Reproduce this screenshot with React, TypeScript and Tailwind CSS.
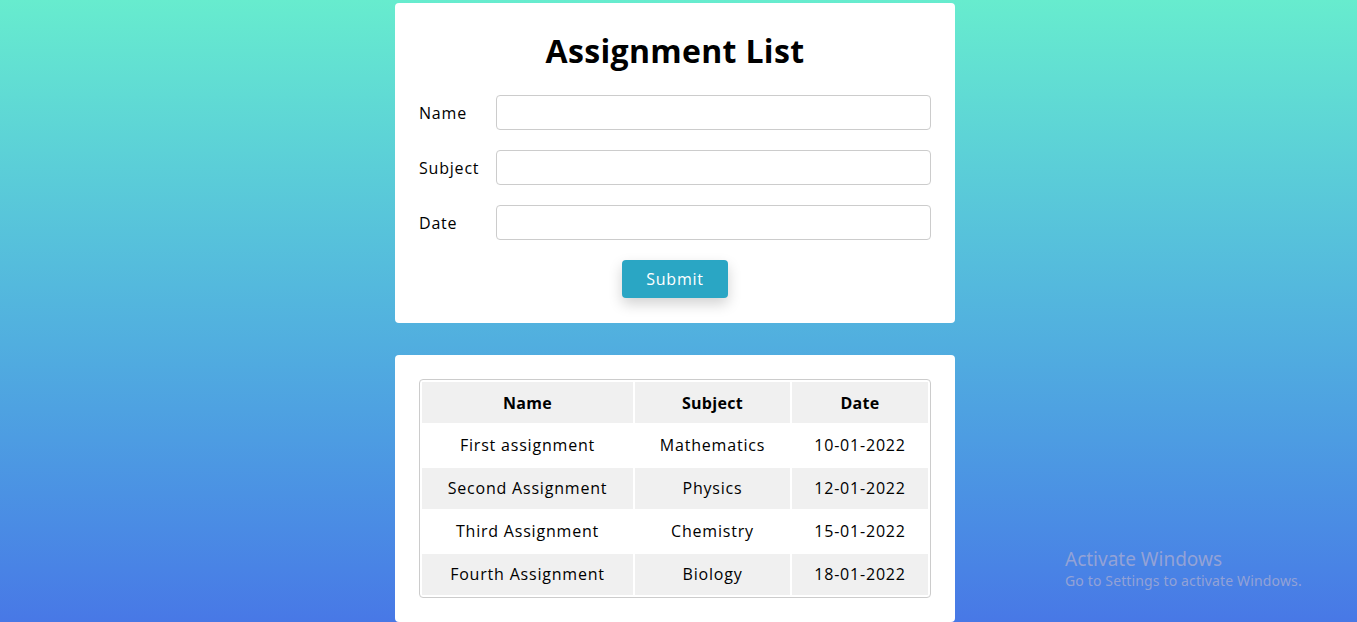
import * as React from 'react';

const rows = [
  { name: 'First assignment', subject: 'Mathematics', date: '10-01-2022' },
  { name: 'Second Assignment', subject: 'Physics', date: '12-01-2022' },
  { name: 'Third Assignment', subject: 'Chemistry', date: '15-01-2022' },
  { name: 'Fourth Assignment', subject: 'Biology', date: '18-01-2022' },
];

const fields = ['Name', 'Subject', 'Date'];

export default function App() {
  return (
    <div className="relative h-[622px] overflow-hidden bg-linear-to-b from-[#67ecce] to-[#4878e6] font-['Open_Sans',sans-serif] text-black">
      <div className="flex flex-col items-center gap-8 pt-[3px] pr-[7px]">
        {/* form card */}
        <div className="w-[560px] rounded bg-white px-6 pt-6 pb-[25px]">
          <h1 className="text-center text-[32px] leading-[48px] font-bold tracking-[0.01em]">Assignment List</h1>
          <form className="mt-5 flex flex-col gap-5" onSubmit={e => e.preventDefault()}>
            {fields.map(f => (
              <div key={f} className="flex items-center">
                <label className="w-[77px] text-base tracking-[0.05em]">{f}</label>
                <input className="h-[35px] flex-1 rounded border border-[#cccccc] px-2 outline-none" />
              </div>
            ))}
            <div className="flex justify-center">
              <button
                type="submit"
                className="h-[38px] w-[106px] rounded bg-[#2aa6c4] text-base tracking-[0.05em] text-white shadow-[0_6px_14px_rgba(0,0,0,0.18)]"
              >
                Submit
              </button>
            </div>
          </form>
        </div>

        {/* list card */}
        <div className="w-[560px] rounded bg-white px-6 pt-6 pb-6">
          <table className="w-[512px] border-separate border-spacing-0.5 rounded border border-[#cccccc] text-base tracking-[0.05em]">
            <thead>
              <tr className="h-[41px] tracking-[0.02em]">
                <th className="w-[211px] bg-[#f0f0f0] font-bold">Name</th>
                <th className="w-[155px] bg-[#f0f0f0] font-bold">Subject</th>
                <th className="w-[136px] bg-[#f0f0f0] font-bold">Date</th>
              </tr>
            </thead>
            <tbody>
              {rows.map((r, i) => (
                <tr key={r.name} className={`h-[41px] text-center ${i % 2 ? 'bg-[#f0f0f0]' : 'bg-white'}`}>
                  <td className="pb-px">{r.name}</td>
                  <td className="pb-px">{r.subject}</td>
                  <td className="pb-px">{r.date}</td>
                </tr>
              ))}
            </tbody>
          </table>
        </div>
      </div>

      {/* windows watermark */}
      <div className="absolute top-[546px] left-[1065px] font-['Noto_Sans',sans-serif] text-[#93a2d6]">
        <div className="text-[19px] leading-[26px]">Activate Windows</div>
        <div className="text-[14px] leading-[18px] tracking-[0.01em]">Go to Settings to activate Windows.</div>
      </div>
    </div>
  );
}
